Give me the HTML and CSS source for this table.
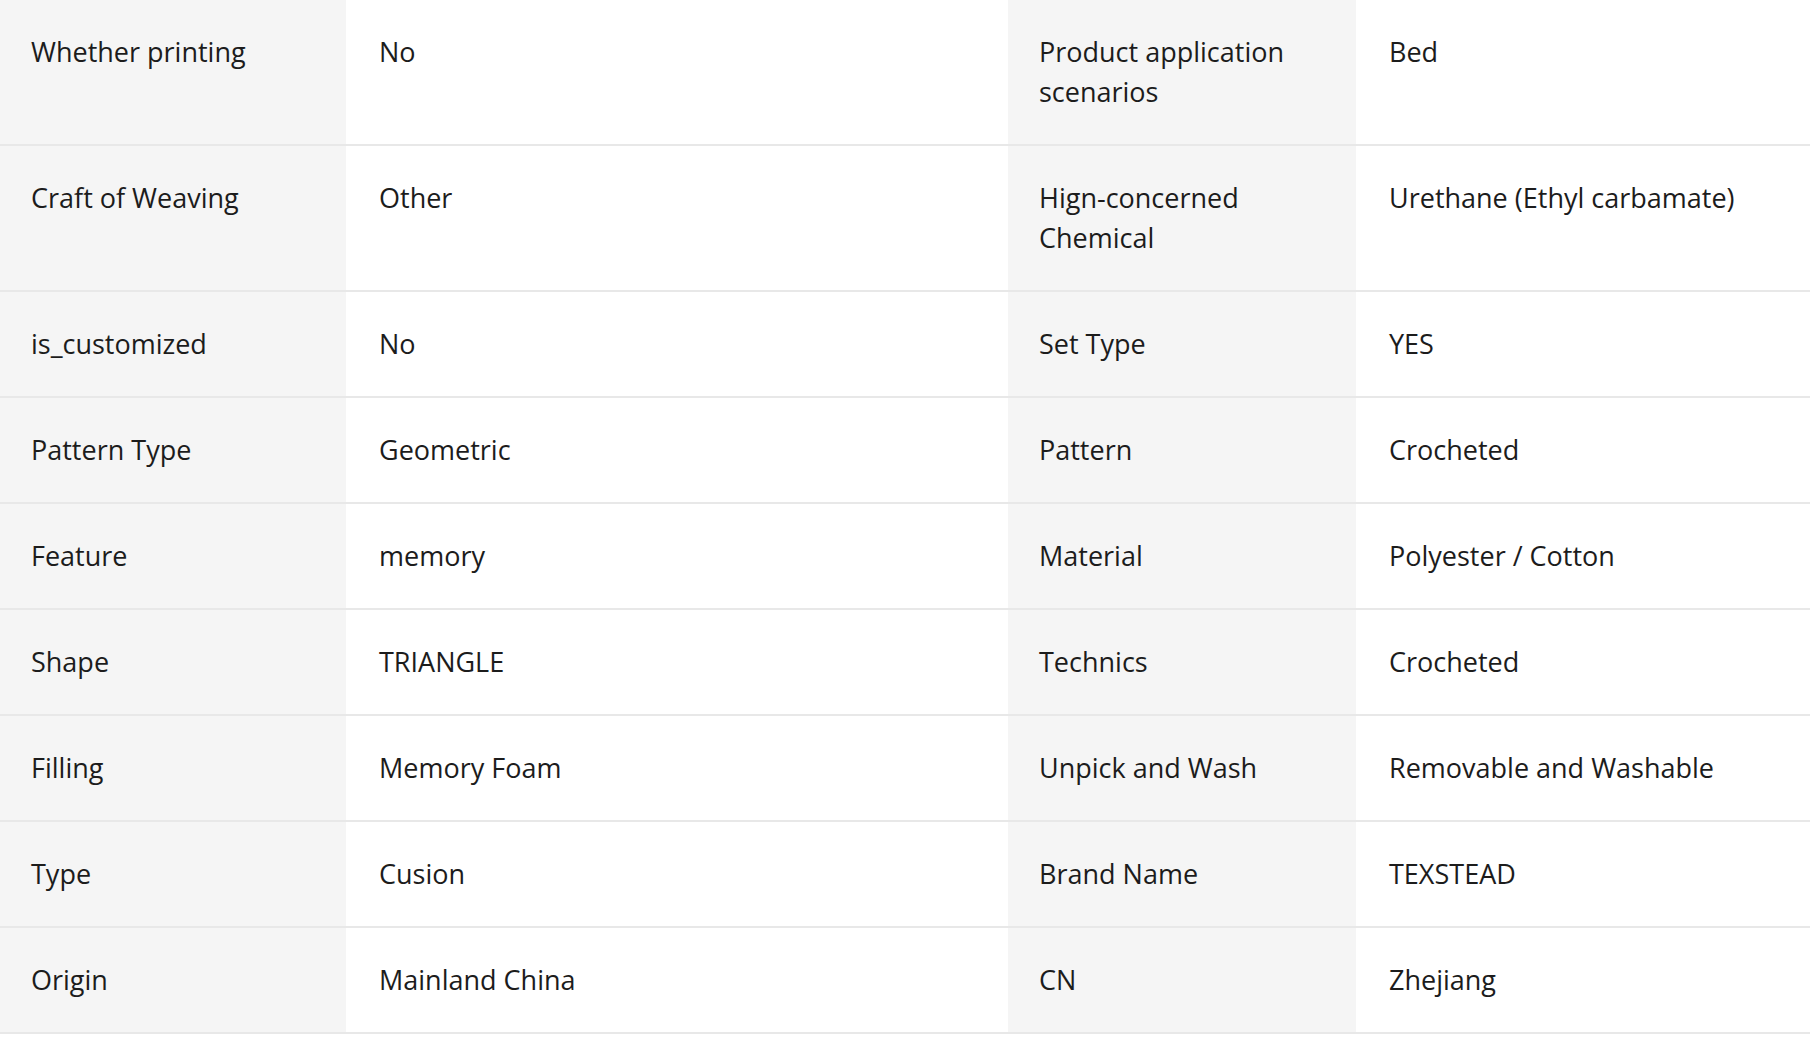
FILE: index.html
```html
<!DOCTYPE html>
<html lang="en">
<head>
<meta charset="utf-8">
<title>Product attributes</title>
<link rel="stylesheet" href="styles.css">
</head>
<body>
<table class="attrs">
  <colgroup>
    <col class="c-key1">
    <col class="c-val1">
    <col class="c-key2">
    <col class="c-val2">
  </colgroup>
  <tbody>
    <tr><td class="key">Whether printing</td><td class="val">No</td><td class="key">Product application scenarios</td><td class="val">Bed</td></tr>
    <tr><td class="key">Craft of Weaving</td><td class="val">Other</td><td class="key">Hign-concerned Chemical</td><td class="val">Urethane (Ethyl carbamate)</td></tr>
    <tr><td class="key">is_customized</td><td class="val">No</td><td class="key">Set Type</td><td class="val">YES</td></tr>
    <tr><td class="key">Pattern Type</td><td class="val">Geometric</td><td class="key">Pattern</td><td class="val">Crocheted</td></tr>
    <tr><td class="key">Feature</td><td class="val">memory</td><td class="key">Material</td><td class="val">Polyester / Cotton</td></tr>
    <tr><td class="key">Shape</td><td class="val">TRIANGLE</td><td class="key">Technics</td><td class="val">Crocheted</td></tr>
    <tr><td class="key">Filling</td><td class="val">Memory Foam</td><td class="key">Unpick and Wash</td><td class="val">Removable and Washable</td></tr>
    <tr><td class="key">Type</td><td class="val">Cusion</td><td class="key">Brand Name</td><td class="val">TEXSTEAD</td></tr>
    <tr><td class="key">Origin</td><td class="val">Mainland China</td><td class="key">CN</td><td class="val">Zhejiang</td></tr>
  </tbody>
</table>
</body>
</html>
```

FILE: styles.css
```css
html, body {
  margin: 0;
  padding: 0;
  background: #ffffff;
}

body {
  font-family: "Open Sans", Lato, "Liberation Sans", sans-serif;
  color: #1c1c1c;
  overflow: hidden;
}

.attrs {
  width: 1810px;
  border-collapse: collapse;
  table-layout: fixed;
}

.c-key1 { width: 346px; }
.c-val1 { width: 662px; }
.c-key2 { width: 348px; }
.c-val2 { width: 454px; }

.attrs td {
  vertical-align: top;
  font-size: 27px;
  line-height: 40px;
  padding: 32px 30px 32px 31px;
  border-bottom: 2px solid #e8e8e8;
}

.attrs td.key {
  background: #f5f5f5;
}

.attrs td.val {
  background: #ffffff;
  padding-left: 33px;
}
```
